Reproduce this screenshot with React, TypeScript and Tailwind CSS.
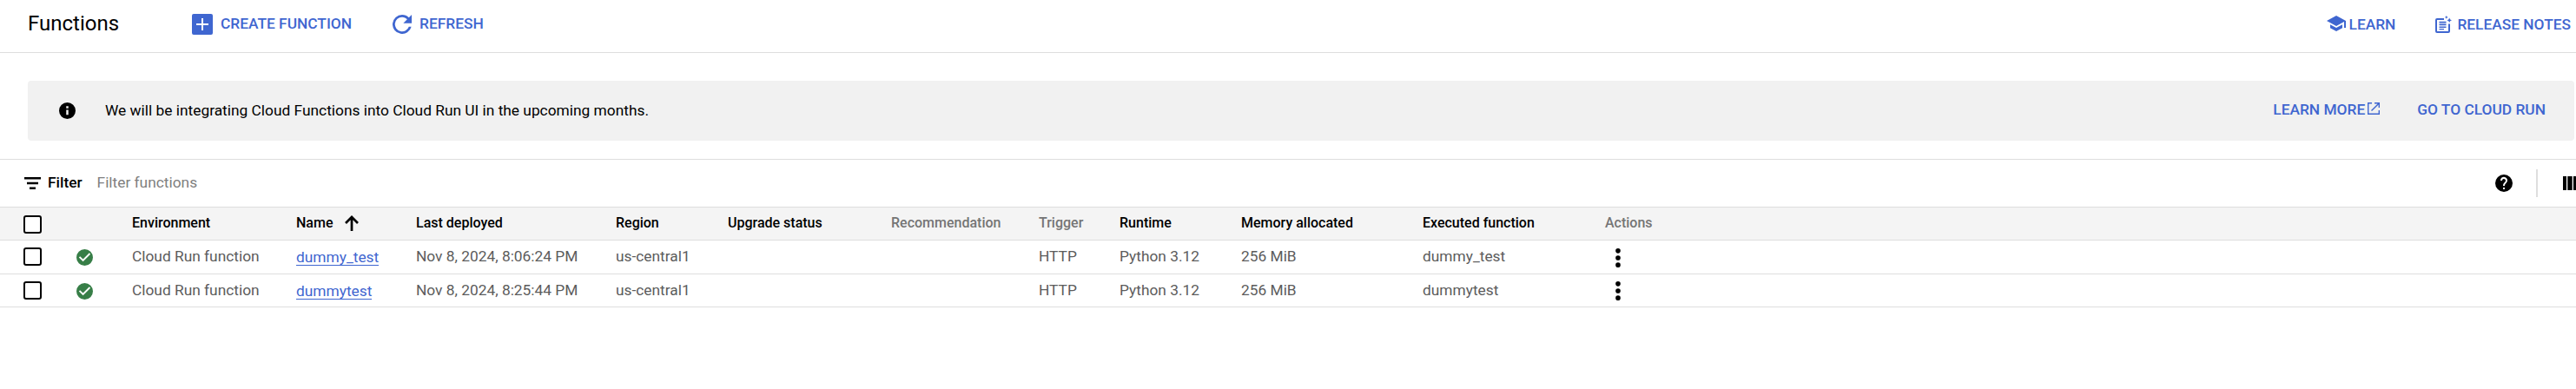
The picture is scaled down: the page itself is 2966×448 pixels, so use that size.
import type { ReactNode } from "react";

type IconProps = { className: string; d: string; viewBox?: string };

function Icon({ className, d, viewBox = "0 0 24 24" }: IconProps) {
  return (
    <svg viewBox={viewBox} className={`block shrink-0 ${className}`} fill="currentColor" aria-hidden="true">
      <path fillRule="evenodd" d={d} />
    </svg>
  );
}

const paths = {
  add: "M2 0h20a2 2 0 0 1 2 2v20a2 2 0 0 1-2 2H2a2 2 0 0 1-2-2V2a2 2 0 0 1 2-2zM11 5v6H5v2h6v6h2v-6h6v-2h-6V5z",
  refresh:
    "M17.65 6.35A7.96 7.96 0 0 0 12 4a8 8 0 1 0 7.73 10h-2.08A6 6 0 1 1 12 6c1.66 0 3.14.69 4.22 1.78L13 11h7V4z",
  school: "M5 13.18v4L12 21l7-3.82v-4L12 17zM12 3 1 9l11 6 9-4.91V17h2V9z",
  notes:
    "M0 5a2 2 0 0 1 2-2h8v2H2v13h13V9.500h2V18a2 2 0 0 1-2 2H2a2 2 0 0 1-2-2zM4.500 6.800h8v1.600h-8zM4.500 9.600h8v1.600h-8zM4.500 12.400h8v1.600h-8zM4.500 15h5.500v1.300H4.500zM12.800 0l.6 1.300 1.300.6-1.300.6-.6 1.300-.6-1.300-1.300-.6 1.300-.6zM16.200 2.500l.9 1.900 1.900.9-1.900.9-.9 1.900-.9-1.900-1.900-.9 1.900-.9z",
  info: "M12 2a10 10 0 1 0 0 20 10 10 0 0 0 0-20zm1.300 15h-2.600v-6h2.600zm0-8h-2.600V6.500h2.600z",
  external: "M0 0h5v1.400H1.400v11.200h11.200V9H14v5H0zM8 0h6v6h-1.400V2.400L5 10 4 9l7.600-7.600H8z",
  filter: "M0 0h19v2.500H0zM3 5.700h13v2.500H3zM6 11.400h7v2.600H6z",
  help: "M12 2a10 10 0 1 0 0 20 10 10 0 0 0 0-20zm1 17h-2v-2h2zm2.070-7.750-.9.920C13.450 12.900 13 13.500 13 15h-2v-.5c0-1.100.45-2.100 1.170-2.830l1.240-1.260A2 2 0 1 0 10 9H8a4 4 0 1 1 7.070 2.250z",
  check: "M12 2a10 10 0 1 0 0 20 10 10 0 0 0 0-20zm-2 15-5-5 1.410-1.410L10 14.170l7.590-7.590L19 8z",
  dots: "M0 3a3 3 0 1 1 6 0 3 3 0 1 1-6 0zM0 11.700a3 3 0 1 1 6 0 3 3 0 1 1-6 0zM0 20.400a3 3 0 1 1 6 0 3 3 0 1 1-6 0z",
  columns: "M0 0h4v16H0zM5.300 0h5.400v16H5.300zM12 0h4v16h-4z",
};

const widths = [
  "w-[88px]",
  "w-[64px]",
  "w-[189px]",
  "w-[138px]",
  "w-[230px]",
  "w-[129px]",
  "w-[188px]",
  "w-[170px]",
  "w-[93px]",
  "w-[140px]",
  "w-[209px]",
  "w-[210px]",
  "w-[100px]",
];

function Row({ cells, className }: { cells: ReactNode[]; className: string }) {
  return (
    <div role="row" className={`flex border-b border-[#dedede] ${className}`}>
      {cells.map((cell, i) => (
        <div key={i} role="cell" className={`shrink-0 ${widths[i]}`}>
          {cell}
        </div>
      ))}
    </div>
  );
}

function Checkbox({ className }: { className: string }) {
  return (
    <span
      role="checkbox"
      aria-checked="false"
      className={`ml-[27px] block size-[21px] rounded-[3px] border-2 border-black bg-white ${className}`}
    />
  );
}

const headings: { label: string; sortable: boolean }[] = [
  { label: "Last deployed", sortable: true },
  { label: "Region", sortable: true },
  { label: "Upgrade status", sortable: true },
  { label: "Recommendation", sortable: false },
  { label: "Trigger", sortable: false },
  { label: "Runtime", sortable: true },
  { label: "Memory allocated", sortable: true },
  { label: "Executed function", sortable: true },
  { label: "Actions", sortable: false },
];

const functions = [
  { name: "dummy_test", deployed: "Nov 8, 2024, 8:06:24 PM" },
  { name: "dummytest", deployed: "Nov 8, 2024, 8:25:44 PM" },
];

function Heading({ children, muted = false }: { children: ReactNode; muted?: boolean }) {
  return (
    <div className={`pt-2 text-[16px] leading-5 font-medium ${muted ? "text-[#757575]" : "text-black"}`}>
      {children}
    </div>
  );
}

export default function App() {
  return (
    <div className="h-[448px] w-full overflow-hidden bg-white font-[Roboto,sans-serif] text-[17.33px] leading-5 whitespace-nowrap text-black">
      <header className="flex h-[61px] items-start border-b border-[#dedede] text-[#3f66d0]">
        <h1 className="w-[190px] pt-[11px] pl-8 text-[24px] leading-8 text-black">Functions</h1>
        <button className="ml-[31px] flex font-medium">
          <Icon d={paths.add} className="mt-4 size-6" />
          <span className="mt-[17px] ml-[9px]">CREATE FUNCTION</span>
        </button>
        <button className="ml-[47px] flex font-medium">
          <Icon d={paths.refresh} viewBox="4 4 16 16" className="mt-[17px] size-[22px]" />
          <span className="mt-[17px] ml-[9px]">REFRESH</span>
        </button>
        <div className="ml-auto flex pr-[6px] font-medium">
          <button className="flex">
            <Icon d={paths.school} viewBox="1 3 22 18" className="mt-[18px] h-[18px] w-[22px]" />
            <span className="mt-[18px] ml-[4px]">LEARN</span>
          </button>
          <button className="ml-[46px] flex">
            <Icon d={paths.notes} viewBox="0 0 19 20" className="mt-[18px] h-[20px] w-[19px]" />
            <span className="mt-[18px] ml-[6px]">RELEASE NOTES</span>
          </button>
        </div>
      </header>

      <section className="mt-8 mr-[2px] ml-8 flex h-[69px] items-start rounded bg-[#f1f1f1]">
        <Icon d={paths.info} viewBox="2 2 20 20" className="mt-[24.500px] ml-[35.500px] size-[19px]" />
        <p className="mt-6 ml-[34.500px]">
          We will be integrating Cloud Functions into Cloud Run UI in the upcoming months.
        </p>
        <div className="ml-auto flex pr-[33px] font-medium text-[#3f66d0]">
          <a className="mt-[23px] flex">
            LEARN MORE
            <Icon d={paths.external} viewBox="0 0 14 14" className="mt-[2px] ml-[3px] size-[14px]" />
          </a>
          <a className="mt-[23px] ml-[43px]">GO TO CLOUD RUN</a>
        </div>
      </section>

      <main className="mt-[21px] border-t border-[#dedede]">
        <div className="flex h-[55px] items-start border-b border-[#dedede]">
          <Icon d={paths.filter} viewBox="0 0 19 14" className="mt-[20px] ml-[27.500px] h-[14px] w-[19px]" />
          <span className="mt-4 ml-[8.500px] font-medium">Filter</span>
          <span className="mt-4 ml-[17px] text-[#808080]">Filter functions</span>
          <div className="ml-auto flex">
            <Icon d={paths.help} viewBox="2 2 20 20" className="mt-[17px] size-5" />
            <div className="mt-[11px] ml-[27px] h-8 w-[2px] bg-[#dedede]" />
            <Icon d={paths.columns} viewBox="0 0 15 16" className="mt-[19px] ml-[29px] h-4 w-[15px]" />
          </div>
        </div>

        <div role="table">
          <Row
            className="h-[38px] bg-[#f4f4f4]"
            cells={[
              <Checkbox className="mt-[9px]" />,
              null,
              <Heading>Environment</Heading>,
              <Heading>
                <span className="flex">
                  Name
                  <svg
                    viewBox="0 0 16 18"
                    className="mt-px ml-[13.500px] block h-[18px] w-4"
                    fill="none"
                    stroke="currentColor"
                    strokeWidth="2.700"
                    aria-hidden="true"
                  >
                    <path d="M8 18V2M1 9l7-7 7 7" />
                  </svg>
                </span>
              </Heading>,
              ...headings.map((h) => (
                <Heading key={h.label} muted={!h.sortable}>
                  {h.label}
                </Heading>
              )),
            ]}
          />
          {functions.map((fn, i) => (
            <Row
              key={fn.name}
              className={`text-[#5c5c5c] ${i === 0 ? "h-[39px]" : "h-[38px]"}`}
              cells={[
                <Checkbox className="mt-2" />,
                <Icon
                  d={paths.check}
                  viewBox="2 2 20 20"
                  className="mt-[9.500px] -ml-[0.500px] size-[19px] text-[#377e47]"
                />,
                <div className="mt-2">Cloud Run function</div>,
                <a className="mt-[9px] inline-block h-5 border-b border-[#3f66d0] text-[#3f66d0]">{fn.name}</a>,
                <div className="mt-2">{fn.deployed}</div>,
                <div className="mt-2">us-central1</div>,
                null,
                null,
                <div className="mt-2">HTTP</div>,
                <div className="mt-2">Python 3.12</div>,
                <div className="mt-2">256 MiB</div>,
                <div className="mt-2">{fn.name}</div>,
                <Icon
                  d={paths.dots}
                  viewBox="0 0 6 23.400"
                  className={`ml-[12px] h-[22px] w-[6px] text-black ${i === 0 ? "mt-[9px]" : "mt-2"}`}
                />,
              ]}
            />
          ))}
        </div>
      </main>
    </div>
  );
}
